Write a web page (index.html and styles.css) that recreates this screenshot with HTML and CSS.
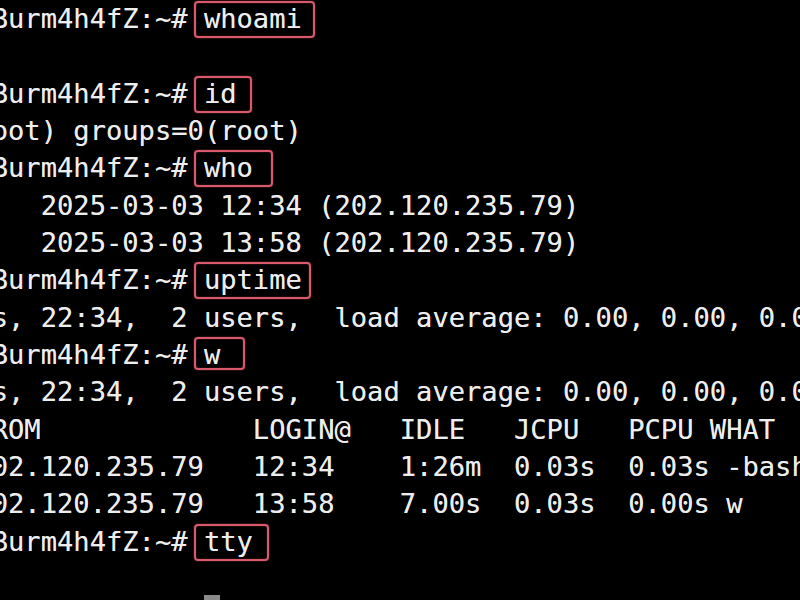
FILE: index.html
```html
<!DOCTYPE html>
<html lang="en">
<head>
<meta charset="utf-8">
<title>Terminal</title>
<link rel="stylesheet" href="styles.css">
</head>
<body>
<main class="term">
<div class="line">Burm4h4fZ:~# <span class="cmd cmd--whoami">whoami</span></div>
<div class="line"></div>
<div class="line">Burm4h4fZ:~# <span class="cmd cmd--id">id</span></div>
<div class="line">oot) groups=0(root)</div>
<div class="line">Burm4h4fZ:~# <span class="cmd cmd--who">who</span></div>
<div class="line">   2025-03-03 12:34 (202.120.235.79)</div>
<div class="line">   2025-03-03 13:58 (202.120.235.79)</div>
<div class="line">Burm4h4fZ:~# <span class="cmd cmd--uptime">uptime</span></div>
<div class="line">s, 22:34,  2 users,  load average: 0.00, 0.00, 0.00</div>
<div class="line">Burm4h4fZ:~# <span class="cmd cmd--w">w</span></div>
<div class="line">s, 22:34,  2 users,  load average: 0.00, 0.00, 0.00</div>
<div class="line">ROM             LOGIN@   IDLE   JCPU   PCPU WHAT</div>
<div class="line">02.120.235.79   12:34    1:26m  0.03s  0.03s -bash</div>
<div class="line">02.120.235.79   13:58    7.00s  0.03s  0.00s w</div>
<div class="line">Burm4h4fZ:~# <span class="cmd cmd--tty">tty</span></div>
<div class="line"></div>
<div class="line line--last"><span class="pad">             </span><span class="cursor"></span></div>
</main>
</body>
</html>
```

FILE: styles.css
```css
html, body {
  margin: 0;
  padding: 0;
  background: #000;
  width: 800px;
  height: 600px;
  overflow: hidden;
}

.term {
  height: 600px;
  overflow: hidden;
  margin-left: -8.3px;
  font-family: "DejaVu Sans Mono", "Liberation Mono", monospace;
  font-size: 27.12px;
  color: #ededed;
  text-shadow: 0 0 0.6px rgba(255, 255, 255, 0.6);
}

.line {
  height: 37.33px;
  line-height: 37.33px;
  white-space: pre;
}

.line--last {
  height: 2.7px;
  overflow: visible;
}

.cmd {
  position: relative;
  --r: -14px;
}

.cmd::before {
  content: "";
  position: absolute;
  left: -10px;
  right: var(--r);
  top: -2px;
  height: 37px;
  box-sizing: border-box;
  border: 2.5px solid #d85a6c;
  border-radius: 4px;
  box-shadow: 0 0 2px rgba(230, 90, 110, 0.55), inset 0 0 2px rgba(230, 90, 110, 0.4);
}

.cmd--whoami { --r: -13px; }
.cmd--id { --r: -15px; }
.cmd--who { --r: -20px; }
.cmd--uptime { --r: -9px; }
.cmd--w { --r: -25px; }
.cmd--tty { --r: -16px; }

.cmd--w::before { height: 33px; }

.cursor {
  display: inline-block;
  width: 16.33px;
  height: 30px;
  margin-top: -2px;
  vertical-align: top;
  background: #8a8a8a;
}
```
